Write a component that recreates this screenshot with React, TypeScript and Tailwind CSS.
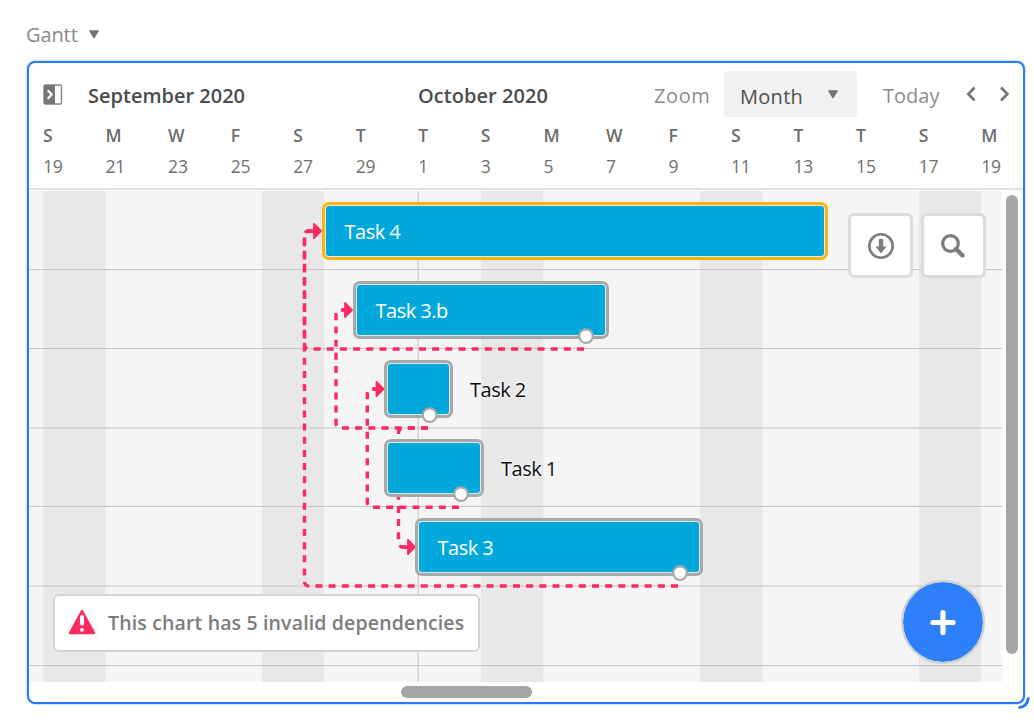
import React from "react";

const days: [string, string][] = [
  ["S", "19"], ["M", "21"], ["W", "23"], ["F", "25"], ["S", "27"], ["T", "29"],
  ["T", "1"], ["S", "3"], ["M", "5"], ["W", "7"], ["F", "9"], ["S", "11"],
  ["T", "13"], ["T", "15"], ["S", "17"], ["M", "19"],
];

const weekends = [43, 262, 481, 700, 919];
const rowLines = [269.5, 348.5, 428, 506.5, 586, 665.5];

const links = [
  "M678 586H309.5Q304.5 586 304.5 581V236Q304.5 231 309.5 231H314",
  "M584 349H309.5Q304.5 349 304.5 344V236Q304.5 231 309.5 231H314",
  "M428 428H341Q336 428 336 423V315Q336 310 341 310H345",
  "M459 507.3H372Q367.3 507.3 367.3 502V394Q367.3 389 372 389H375",
  "M428 428H403.5Q398.5 428 398.5 433V542Q398.5 547 403.5 547H408",
];

const heads: [number, number, number][] = [[322, 231, 15], [353, 310, 10], [384.5, 389, 11], [416, 547, 14]];
const knobs: [number, number][] = [[586, 336.1], [429.7, 415.1], [461, 494.1], [680, 573.1]];

function Caret() {
  return (
    <svg width="12" height="9" viewBox="0 0 12 9" className="shrink-0">
      <path d="M1.5 .8h9L6 8.2z" fill="#747474" stroke="#747474" strokeWidth="1" strokeLinejoin="round" />
    </svg>
  );
}

function Grid() {
  return (
    <svg className="absolute inset-0" width="973" height="491" viewBox="29 191 973 491">
      <rect x="29" y="191" width="973" height="491" fill="#f5f5f5" />
      {weekends.map((x) => (
        <rect key={x} x={x} y="191" width="62.3" height="491" fill="#e8e8e8" />
      ))}
      <path d="M418.2 191V682" stroke="#d6d6d6" strokeWidth="1.6" />
      {rowLines.map((y) => (
        <path key={y} d={`M29 ${y}H1002`} stroke="#c6c6c6" strokeWidth="1.2" />
      ))}
      {links.map((d) => (
        <path key={d} d={d} fill="none" stroke="#fb2a62" strokeWidth="3.4" strokeDasharray="7 6.17" />
      ))}
      {heads.map(([x, y, tail]) => (
        <path
          key={y}
          d={`M${x - 8} ${y - 7}L${x - 1} ${y}L${x - 8} ${y + 7}V${y + 1}H${x - tail}V${y - 0.6}H${x - 8}Z`}
          fill="#fb2a62"
          stroke="#fb2a62"
          strokeWidth="1.8"
          strokeLinejoin="round"
        />
      ))}
    </svg>
  );
}

function Bar({ place, label, ring = "border-[#a8a8a8]" }: { place: string; label?: string; ring?: string }) {
  return (
    <div className={`absolute h-[58px] rounded-[7px] border-[3px] bg-[#dceef4] p-px ${ring} ${place}`}>
      <div className="flex h-full items-center rounded-[3px] bg-[#02a8dc] pl-[18.5px] pt-[2px] text-[20px] text-white">
        <span className="tracking-[-0.5px]">{label}</span>
      </div>
    </div>
  );
}

export default function App() {
  return (
    <div className="relative h-[720px] w-[1034px] overflow-hidden bg-white font-['Open_Sans','Noto_Sans',sans-serif] text-[#808080]">
      <div className="flex h-[61px] items-start pl-[26px] pt-[20px]">
        <span className="w-[62px] whitespace-nowrap text-[20px] leading-[30px] tracking-[-0.1px] text-[#8a8a8a]">Gantt</span>
        <div className="pt-[10px]"><Caret /></div>
      </div>

      <div className="ml-[27px] flex h-[643px] w-[998px] flex-col rounded-[8px] border-2 border-[#277bfb] bg-white shadow-[0_0_0_0.5px_#277bfb66]">
        <div className="flex h-[58px] shrink-0 items-center whitespace-nowrap pl-[14px] pt-[7px] text-[20px]">
          <svg width="20" height="22" viewBox="0 0 20 22" className="mb-[2px] mr-[25px] shrink-0">
            <rect x="1" y="1" width="17.5" height="19" rx="1.5" fill="#fff" stroke="#838383" strokeWidth="1.4" />
            <path d="M1 1h11v19H1z" fill="#777" />
            <path d="m4.7 6.3 4 4.2-4 4.2" fill="none" stroke="#fff" strokeWidth="2" />
          </svg>
          <span className="w-[330px] font-semibold text-[#4c4c4c]">September 2020</span>
          <span className="w-[236px] font-semibold tracking-[0.05px] text-[#4c4c4c]">October 2020</span>
          <span className="w-[70px] tracking-[0.6px] text-[#8d8d8d]">Zoom</span>
          <div className="mb-[3px] flex h-[46px] w-[133px] shrink-0 items-center justify-between rounded-[4px] bg-[#f1f1f1] pl-4 pr-[18px] pt-[5px] text-[#505050]">
            <span className="tracking-[0.3px]">Month</span>
            <div className="pb-[4px]"><Caret /></div>
          </div>
          <span className="ml-[26px] w-[82px] text-[#8d8d8d]">Today</span>
          <svg width="46" height="20" viewBox="0 0 46 20" fill="none" stroke="#747474" strokeWidth="2.6" className="mb-[3px] shrink-0">
            <path d="m9.5 3.5-6.2 6.5 6.2 6.5M36 3.5l6.5 6.5-6.5 6.5" />
          </svg>
        </div>

        <div className="flex h-[69px] shrink-0 overflow-hidden border-b-2 border-[#e2e2e2] pl-[14px]">
          {days.map(([d, n], i) => (
            <div key={i} className="w-[62.55px] shrink-0">
              <div className="h-[30px] text-[17.5px] font-semibold leading-[29px] text-[#6c6c6c]">{d}</div>
              <div className="text-[17.5px] leading-[30px] tracking-[-0.2px] text-[#707070]">{n}</div>
            </div>
          ))}
        </div>

        <div className="flex pt-[1px]">
          <div className="relative h-[491px] w-[973px] shrink-0">
            <Grid />
            <Bar place="left-[293px] top-[11px] w-[506px]" ring="border-[#ffb20a]" label="Task 4" />
            <Bar place="left-[324px] top-[90px] w-[256px]" label="Task 3.b" />
            <Bar place="left-[355px] top-[169px] w-[69px]" />
            <Bar place="left-[355px] top-[248px] w-[100px]" />
            <Bar place="left-[386px] top-[327px] w-[288px]" label="Task 3" />
            <span className="absolute left-[441px] top-[185px] whitespace-nowrap text-[20px] leading-[28px] tracking-[-0.5px] text-[#111] [text-shadow:0_0_3px_#f5f5f5,0_0_3px_#f5f5f5,0_0_4px_#f5f5f5,0_0_4px_#f5f5f5]">Task 2</span>
            <span className="absolute left-[472px] top-[264px] whitespace-nowrap text-[20px] leading-[28px] tracking-[-0.5px] text-[#111] [text-shadow:0_0_3px_#f5f5f5,0_0_3px_#f5f5f5,0_0_4px_#f5f5f5,0_0_4px_#f5f5f5]">Task 1</span>
            <svg className="absolute inset-0" width="973" height="491" viewBox="29 191 973 491">
              {knobs.map(([x, y]) => (
                <circle key={y} cx={x} cy={y} r="6.8" fill="#fff" stroke="#a8a8a8" strokeWidth="2.2" />
              ))}
            </svg>

            <div className="absolute left-[819px] top-[22px] flex gap-[8px]">
              <div className="flex h-[65px] w-[65px] items-center justify-center rounded-[6px] border-[3px] border-[#dcdcdc] bg-white pt-px">
                <svg width="28" height="28" viewBox="0 0 28 28" className="shrink-0">
                  <circle cx="14" cy="14" r="11.7" fill="none" stroke="#7d7d7d" strokeWidth="2.6" />
                  <path d="M11.8 7.5q2.2-1.5 4.4 0v7h3.3L14 21.5l-5.5-7h3.3z" fill="#7d7d7d" />
                </svg>
              </div>
              <div className="flex h-[65px] w-[65px] items-center justify-center rounded-[6px] border-[3px] border-[#dadada] bg-white pr-[2px] pt-px">
                <svg width="26" height="26" viewBox="0 0 26 26" fill="none" stroke="#7d7d7d" className="shrink-0">
                  <circle cx="10.5" cy="10.5" r="7.8" strokeWidth="3.2" />
                  <path d="m16 16 6.5 6.5" strokeWidth="4.4" strokeLinecap="round" />
                </svg>
              </div>
            </div>

            <div className="absolute left-[24px] top-[403px] flex h-[58px] w-[427px] items-center whitespace-nowrap rounded-[6px] border-2 border-[#d3d3d3] bg-white pl-[13px] text-[19.5px] font-semibold tracking-[0.15px] text-[#7c7c7c]">
              <svg width="28" height="26" viewBox="0 0 28 26" className="mb-[2px] mr-[12px] shrink-0">
                <path d="M14 2 26 24H2z" fill="#fb2a62" stroke="#fb2a62" strokeWidth="2.5" strokeLinejoin="round" />
                <path d="M14 8v6.5" stroke="#fff" strokeWidth="4" strokeLinecap="round" />
                <circle cx="14" cy="20.8" r="1.9" fill="#fff" />
              </svg>
              This chart has 5 invalid dependencies
            </div>

            <div className="absolute left-[872px] top-[389px] flex size-[84px] items-center justify-center rounded-full border-2 border-[#cfcfcf] bg-[#2d80fa] bg-clip-padding">
              <svg width="28" height="28" viewBox="0 0 28 28" stroke="#fff" strokeWidth="5.2" strokeLinecap="round">
                <path d="M4 14.5h20M14 4.5v20" />
              </svg>
            </div>
          </div>
          <div className="ml-[4px] mt-[4px] h-[459px] w-[12px] shrink-0 rounded-full bg-[#a5a5a5]" />
        </div>
        <div className="ml-[372px] mt-[4px] h-[12px] w-[131px] rounded-full bg-[#a5a5a5]" />
      </div>

      <svg className="absolute left-[1014px] top-[694px]" width="20" height="20" viewBox="0 0 20 20" fill="none">
        <path d="M4.5 13.7Q13.2 13.2 14.5 3.5" stroke="#277bfb" strokeWidth="2.8" />
      </svg>
    </div>
  );
}
